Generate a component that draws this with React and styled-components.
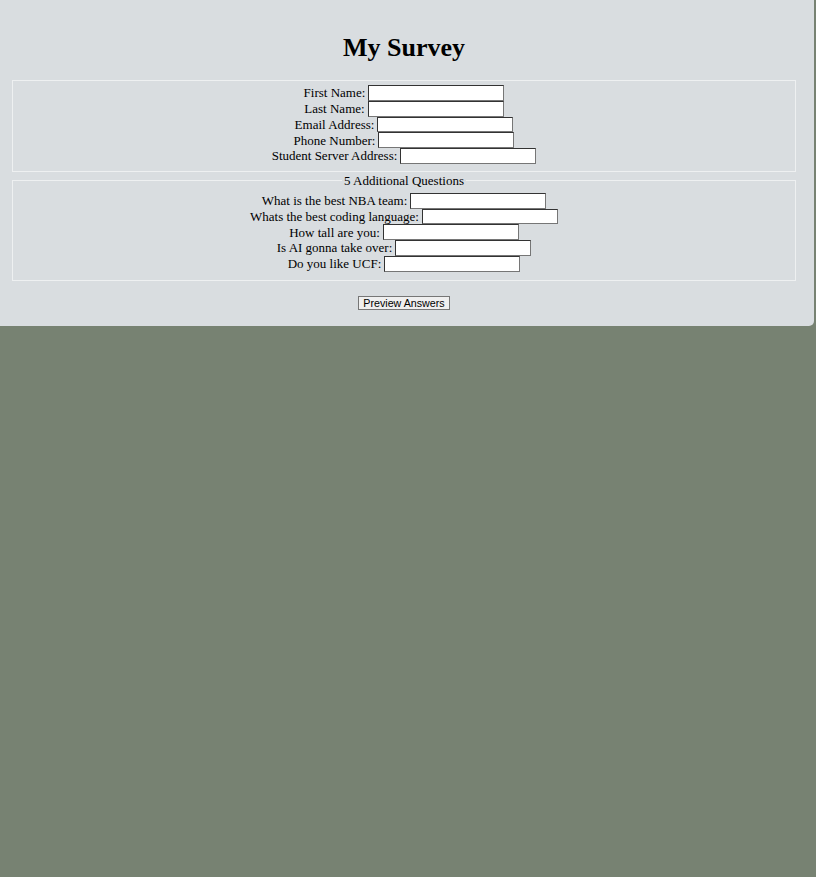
import styled, { createGlobalStyle } from 'styled-components';

const GlobalStyle = createGlobalStyle`
  body {
    margin: 0;
    background: #778272;
    font-family: "Liberation Serif", "Times New Roman", serif;
  }
`

const firstFields = ['First Name', 'Last Name', 'Email Address', 'Phone Number', 'Student Server Address'];
const extraFields = ['What is the best NBA team', 'Whats the best coding language', 'How tall are you', 'Is AI gonna take over', 'Do you like UCF'];

const App = () => {

    const rows = fields => fields.map(label => (
        <Row key={label}>
            <label>{label}:</label>
            <Field type="text" />
        </Row>
    ));

    return <>
        <GlobalStyle />
        <Panel>
            <Title>My Survey</Title>
            <Group>
                {rows(firstFields)}
            </Group>
            <Group $spaced>
                <Legend>5 Additional Questions</Legend>
                {rows(extraFields)}
            </Group>
            <Actions>
                <Button>Preview Answers</Button>
            </Actions>
        </Panel>
    </>
}

export default App;

const Panel = styled.div`
  width: 784px;
  padding: 33px 18px 16px 12px;
  background: #d9dde0;
  border-bottom-right-radius: 5px;
  font-size: 13px;
  color: #000;
`

const Title = styled.h1`
  margin: 0 0 17px;
  font-size: 26px;
  line-height: 30px;
  font-weight: bold;
  text-align: center;
`

const Group = styled.fieldset`
  margin: ${p => p.$spaced ? '1px' : '0'} 0 0;
  padding: ${p => p.$spaced ? '5px' : '4px'} 0 ${p => p.$spaced ? '8px' : '7px'};
  border: 1px solid #eef0f1;
  min-width: 0;
`

const Legend = styled.legend`
  margin: 0 auto;
  padding: 0 2px;
  line-height: 15px;
`

const Row = styled.div`
  display: flex;
  justify-content: center;
  align-items: center;
  gap: 3px;
  height: 15.75px;
  line-height: 15px;
`

const Field = styled.input`
  box-sizing: border-box;
  width: 136px;
  height: 15.75px;
  margin: 0;
  padding: 0 2px;
  background: #fff;
  border: 1px solid;
  border-color: #333 #767676 #767676 #333;
  font-size: 11px;
`

const Actions = styled.div`
  display: flex;
  justify-content: center;
  margin-top: 15px;
`

const Button = styled.button`
  box-sizing: border-box;
  height: 14px;
  padding: 0 4px;
  background: #efefef;
  border: 1px solid #767676;
  border-radius: 0;
  font-family: "Liberation Sans", Arial, sans-serif;
  font-size: 10.7px;
  line-height: 12px;
  color: #000;
`
